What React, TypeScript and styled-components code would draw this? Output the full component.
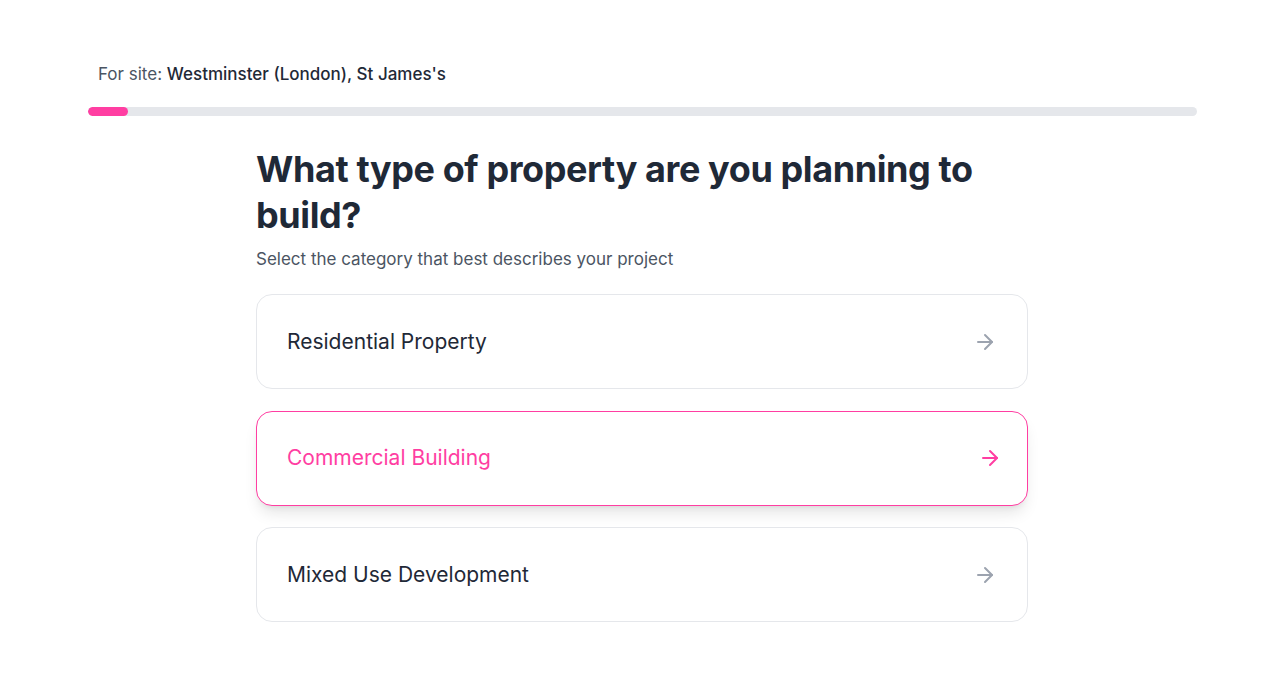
import React from 'react'
import styled, { createGlobalStyle } from 'styled-components'

const GlobalStyle = createGlobalStyle`
  html, body {
    margin: 0;
    padding: 0;
    background: #ffffff;
    font-family: Inter, "Noto Sans", sans-serif;
    -webkit-font-smoothing: antialiased;
  }
`

const PINK = '#ff3ea2'

const options = [
  { label: 'Residential Property', active: false },
  { label: 'Commercial Building', active: true },
  { label: 'Mixed Use Development', active: false },
]

const Arrow: React.FC<{ active?: boolean }> = ({ active }) => (
  <ArrowIcon
    $active={active}
    width="24"
    height="24"
    viewBox="0 0 24 24"
    fill="none"
    stroke="currentColor"
    strokeWidth="2"
    strokeLinecap="round"
    strokeLinejoin="round"
  >
    <path d="M5 12h14" />
    <path d="M12 5l7 7-7 7" />
  </ArrowIcon>
)

const App: React.FC = () => {
  return (
    <Page>
      <GlobalStyle />
      <Header>
        <SiteLine>
          For site: <SiteName>Westminster (London), St James's</SiteName>
        </SiteLine>
        <Track>
          <Fill style={{ width: `${(1 / 28) * 100}%` }} />
        </Track>
      </Header>
      <Content>
        <Title>What type of property are you planning to build?</Title>
        <Subtitle>Select the category that best describes your project</Subtitle>
        <OptionList>
          {options.map((o) => (
            <Option key={o.label} $active={o.active}>
              <OptionLabel $active={o.active}>{o.label}</OptionLabel>
              <Arrow active={o.active} />
            </Option>
          ))}
        </OptionList>
      </Content>
    </Page>
  )
}

const Page = styled.div`
  padding: 62px 83px 0 88px;
  box-sizing: border-box;
  width: 1280px;
`

const Header = styled.div`
  display: flex;
  flex-direction: column;
  gap: 21px;
`

const SiteLine = styled.div`
  padding-left: 10px;
  font-size: 17px;
  line-height: 24px;
  color: #4b5563;
`

const SiteName = styled.span`
  color: #1f2937;
  font-weight: 500;
`

const Track = styled.div`
  height: 9px;
  border-radius: 5px;
  background: #e5e7eb;
  overflow: hidden;
`

const Fill = styled.div`
  height: 100%;
  border-radius: 5px;
  background: ${PINK};
`

const Content = styled.div`
  width: 772px;
  margin: 30px 0 0 168px;
`

const Title = styled.h1`
  margin: 0;
  font-size: 36px;
  line-height: 46px;
  font-weight: 700;
  letter-spacing: -0.4px;
  color: #1f2937;
`

const Subtitle = styled.p`
  margin: 9px 0 0;
  font-size: 17px;
  line-height: 24px;
  color: #4b5563;
`

const OptionList = styled.div`
  margin-top: 23px;
  display: flex;
  flex-direction: column;
  gap: 21.5px;
`

const Option = styled.div<{ $active?: boolean }>`
  height: 95px;
  box-sizing: border-box;
  display: flex;
  align-items: center;
  justify-content: space-between;
  padding: 0 30px 0 30px;
  border-radius: 16px;
  background: #ffffff;
  border: ${({ $active }) => ($active ? `1.5px solid ${PINK}` : '1.5px solid #e5e7eb')};
  box-shadow: ${({ $active }) =>
    $active ? '0 10px 15px -3px rgba(0,0,0,0.1), 0 4px 6px -4px rgba(0,0,0,0.1)' : 'none'};
`

const OptionLabel = styled.span<{ $active?: boolean }>`
  font-size: 21px;
  line-height: 28px;
  color: ${({ $active }) => ($active ? PINK : '#1f2937')};
`

const ArrowIcon = styled.svg<{ $active?: boolean }>`
  color: ${({ $active }) => ($active ? PINK : '#9ca3af')};
  transform: ${({ $active }) => ($active ? 'translateX(5px)' : 'none')};
  flex-shrink: 0;
`

export default App
